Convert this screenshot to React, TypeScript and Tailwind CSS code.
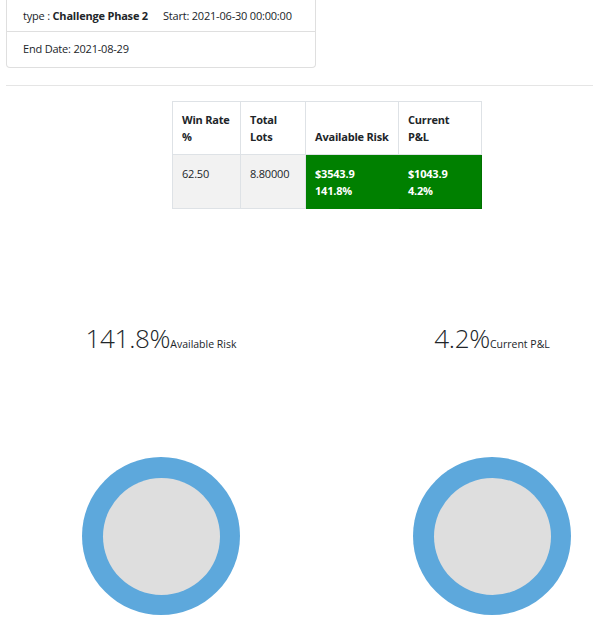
export default function App() {
  return (
    <div className="w-[593px] h-[625px] overflow-hidden bg-white text-[#212529] font-['Open_Sans',sans-serif]">
      {/* account card */}
      <div className="ml-[6px] w-[310px] border border-t-0 border-[#dfdfdf] rounded-b-[4px] text-[11px] tracking-[-0.2px] whitespace-nowrap">
        <div className="h-[32px] flex items-center gap-[15px] px-[16px] pt-[2px] border-b border-[#dfdfdf]">
          <span>
            type : <b className="font-bold">Challenge Phase 2</b>
          </span>
          <span>Start: 2021-06-30 00:00:00</span>
        </div>
        <div className="h-[35px] flex items-center px-[16px]">End Date: 2021-08-29</div>
      </div>

      <div className="ml-[6px] mt-[17px] border-t border-[#e5e5e5]" />

      {/* stats table */}
      <table className="ml-[172px] mt-[15px] w-[310px] border-collapse text-[11px] tracking-[-0.2px] leading-[17px] whitespace-nowrap">
        <thead>
          <tr className="h-[53px] font-bold">
            <th className="w-[68px] px-[9px] pb-[9px] align-bottom text-left border border-[#dee2e6]">
              Win Rate
              <br />%
            </th>
            <th className="w-[65px] px-[9px] pb-[9px] align-bottom text-left border border-[#dee2e6]">
              Total
              <br />
              Lots
            </th>
            <th className="w-[93px] px-[9px] pb-[9px] align-bottom text-left border border-[#dee2e6]">Available Risk</th>
            <th className="px-[9px] pb-[9px] align-bottom text-left border border-[#dee2e6]">
              Current
              <br />
              P&amp;L
            </th>
          </tr>
        </thead>
        <tbody>
          <tr className="h-[54px]">
            <td className="px-[9px] pt-[10px] align-top bg-[#f2f2f2] border border-[#dee2e6]">62.50</td>
            <td className="px-[9px] pt-[10px] align-top bg-[#f2f2f2] border border-[#dee2e6]">8.80000</td>
            <td className="px-[9px] pt-[10px] align-top bg-[#008000] text-white font-bold border border-[#008000]">
              $3543.9
              <br />
              141.8%
            </td>
            <td className="px-[9px] pt-[10px] align-top bg-[#008000] text-white font-bold border border-[#007000]">
              $1043.9
              <br />
              4.2%
            </td>
          </tr>
        </tbody>
      </table>

      {/* gauges */}
      <div className="flex mt-[105px]">
        <Gauge value="141.8%" label="Available Risk" className="ml-[61px]" />
        <Gauge value="4.2%" label="Current P&L" className="ml-[131px]" />
      </div>
    </div>
  );
}

function Gauge({ value, label, className }: { value: string; label: string; className: string }) {
  return (
    <div className={"w-[200px] flex flex-col items-center " + className}>
      <div className="h-[40px] flex items-end whitespace-nowrap">
        <span className="text-[26px] font-light leading-[32px] tracking-[-0.3px]">{value}</span>
        <span className="text-[10.5px] leading-[14px] mb-[3px]">{label}</span>
      </div>
      <div className="mt-[103px] w-[158px] h-[158px] rounded-full bg-[#5da8dc] flex items-center justify-center">
        <div className="w-[117px] h-[117px] rounded-full bg-[#dedede]" />
      </div>
    </div>
  );
}
